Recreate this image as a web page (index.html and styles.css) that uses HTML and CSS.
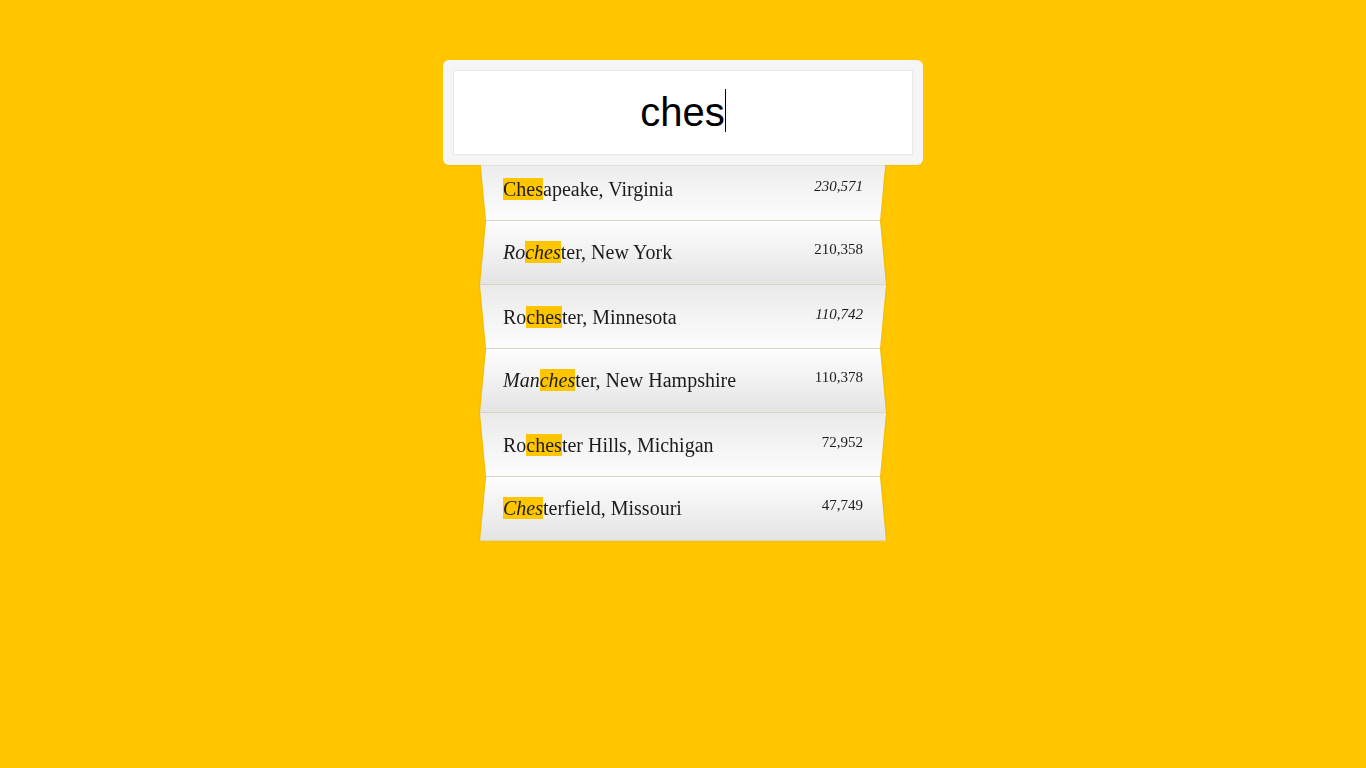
FILE: index.html
```html
<!DOCTYPE html>
<html lang="en">
<head>
<meta charset="utf-8">
<title>City search</title>
<link rel="stylesheet" href="styles.css">
</head>
<body>
<div class="search">
  <div class="card">
    <div class="field">ches<span class="caret"></span></div>
  </div>
  <ul class="results">
    <li class="row fold-a"><span class="city"><mark>Ches</mark>apeake, Virginia</span><span class="pop"><em>230,571</em></span></li>
    <li class="row fold-b"><span class="city"><em>Ro</em><mark><em>ches</em></mark>ter, New York</span><span class="pop">210,358</span></li>
    <li class="row fold-a"><span class="city">Ro<mark>ches</mark>ter, Minnesota</span><span class="pop"><em>110,742</em></span></li>
    <li class="row fold-b"><span class="city"><em>Man</em><mark><em>ches</em></mark>ter, New Hampshire</span><span class="pop">110,378</span></li>
    <li class="row fold-a"><span class="city">Ro<mark>ches</mark>ter Hills, Michigan</span><span class="pop">72,952</span></li>
    <li class="row fold-b"><span class="city"><mark><em>Ches</em></mark>terfield, Missouri</span><span class="pop">47,749</span></li>
  </ul>
</div>
</body>
</html>
```

FILE: styles.css
```css
html, body {
  margin: 0;
  padding: 0;
  background: #ffc600;
}

body {
  font-family: "Liberation Serif", "Times New Roman", serif;
  color: #1c1c1c;
}

.search {
  width: 480px;
  margin: 0 auto;
  padding-top: 60px;
}

.card {
  position: relative;
  z-index: 2;
  background: #f5f5f5;
  border-radius: 6px;
  padding: 10px;
  box-shadow: 0 1px 1px rgba(0, 0, 0, 0.06);
}

.field {
  height: 83px;
  border: 1px solid #e8e8e8;
  background: #ffffff;
  text-align: center;
  font-family: "Liberation Sans", Arial, sans-serif;
  font-size: 40px;
  line-height: 83px;
  color: #000;
}

.caret {
  display: inline-block;
  width: 1px;
  height: 43px;
  background: #000;
  vertical-align: -6px;
}

.results {
  list-style: none;
  margin: -8px auto 0;
  padding: 0;
  width: 406px;
  position: relative;
  z-index: 1;
  filter: drop-shadow(0 0 1px rgba(160, 110, 0, 0.35));
}

.row {
  display: flex;
  justify-content: space-between;
  align-items: flex-start;
  box-sizing: border-box;
  height: 64px;
  padding: 0 23px;
  border-bottom: 1px solid #dcd5bd;
}

.fold-a {
  padding-top: 1px;
  background: linear-gradient(to bottom, #eaeaea, #fdfdfd);
  clip-path: polygon(0 0, 100% 0, calc(100% - 6px) 100%, 6px 100%);
}

.fold-b {
  background: linear-gradient(to bottom, #fefefe, #e4e4e4);
  clip-path: polygon(6px 0, calc(100% - 6px) 0, 100% 100%, 0 100%);
}

.city {
  font-size: 20px;
  line-height: 63px;
  white-space: nowrap;
}

.pop {
  font-size: 15px;
  line-height: 15px;
  margin-top: 21px;
}

mark {
  background: #ffc600;
  color: inherit;
}

em {
  font-style: italic;
}
```
